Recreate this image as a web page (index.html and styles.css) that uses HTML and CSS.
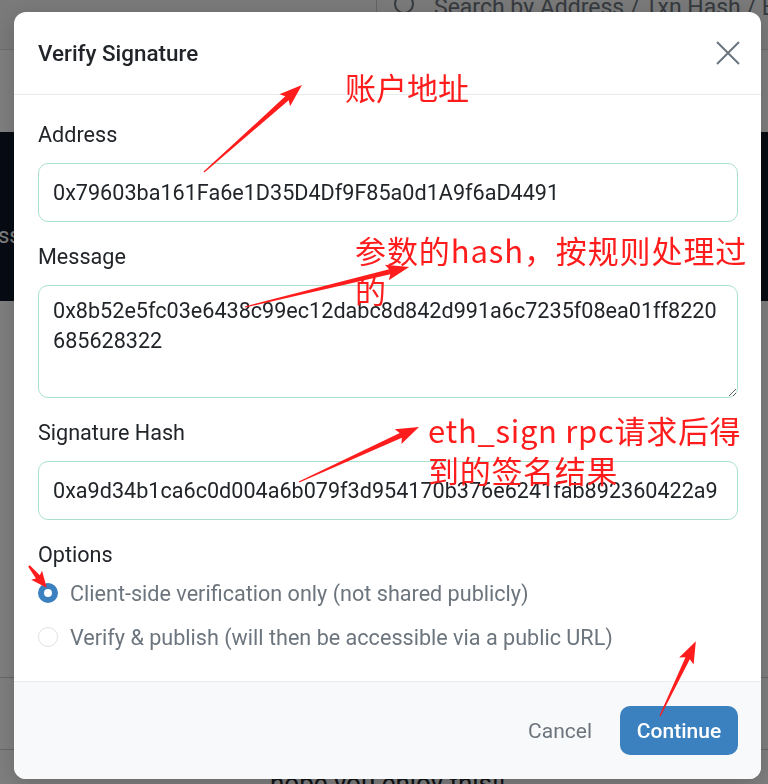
FILE: index.html
```html
<!DOCTYPE html>
<html lang="en">
<head>
    <meta charset="UTF-8">
    <meta name="viewport" content="width=device-width, initial-scale=1.0">
    <title>Verify Signature</title>
    <link rel="stylesheet" href="styles.css">
</head>
<body>
<div class="page">
    <header class="topbar">
        <div class="search">
            <svg class="search-icon" width="26" height="26" viewBox="0 0 26 26">
                <circle cx="12" cy="8" r="9" fill="none" stroke="#6c757d" stroke-width="2"/>
            </svg>
            <span class="search-text">Search by Address / Txn Hash / Block / Token / Domain Name</span>
        </div>
    </header>
    <nav class="nav"></nav>
    <section class="hero">
        <span class="hero-text">ss</span>
    </section>
    <main class="content">
        <div class="row row-tall"></div>
        <div class="row"></div>
        <p class="note">hope you enjoy this!!</p>
    </main>
</div>

<div class="backdrop"></div>

<div class="modal">
    <div class="modal-header">
        <h2 class="modal-title">Verify Signature</h2>
        <button class="close" aria-label="Close">
            <svg width="24" height="24" viewBox="0 0 24 24">
                <path d="M1 1 L23 23 M23 1 L1 23" stroke="#6c757d" stroke-width="2" fill="none"/>
            </svg>
        </button>
    </div>
    <div class="modal-body">
        <div class="field">
            <label class="field-label">Address</label>
            <input class="field-input" type="text" value="0x79603ba161Fa6e1D35D4Df9F85a0d1A9f6aD4491">
        </div>
        <div class="field">
            <label class="field-label">Message</label>
            <textarea class="field-input field-area">0x8b52e5fc03e6438c99ec12dabc8d842d991a6c7235f08ea01ff8220685628322</textarea>
        </div>
        <div class="field">
            <label class="field-label">Signature Hash</label>
            <input class="field-input" type="text" value="0xa9d34b1ca6c0d004a6b079f3d954170b376e6241fab892360422a9">
        </div>
        <div class="options">
            <div class="field-label">Options</div>
            <div class="option">
                <span class="radio checked"></span>
                <span>Client-side verification only (not shared publicly)</span>
            </div>
            <div class="option">
                <span class="radio"></span>
                <span>Verify &amp; publish (will then be accessible via a public URL)</span>
            </div>
        </div>
    </div>
    <div class="modal-footer">
        <button class="btn-cancel">Cancel</button>
        <button class="btn-continue">Continue</button>
    </div>
</div>

<!-- red annotations drawn on top of the screenshot -->
<div class="notes">
    <svg class="arrows" width="768" height="784" viewBox="0 0 768 784">
        <g fill="#ff1c1c">
            <polygon transform="translate(204 172) rotate(-41.6)" points="0,-0.6 111,-2.6 108,-8 131,0 108,8 111,2.6 0,0.6"/>
            <polygon transform="translate(245 307) rotate(-13.7)" points="0,-0.6 149,-2.6 146,-8 169,0 146,8 149,2.6 0,0.6"/>
            <polygon transform="translate(299 482) rotate(-24.6)" points="0,-0.6 112,-2.6 109,-8 132,0 109,8 112,2.6 0,0.6"/>
            <polygon transform="translate(29 566) rotate(50.7)" points="0,-1 14,-2.5 12,-7 28,0 12,7 14,2.5 0,1"/>
            <polygon transform="translate(660 716) rotate(-64.4)" points="0,-0.6 64,-2.4 61,-8 83,0 61,8 64,2.4 0,0.6"/>
        </g>
    </svg>
    <div class="note-text note-1">账户地址</div>
    <div class="note-text note-2">参数的hash，按规则处理过<br>的</div>
    <div class="note-text note-3">eth_sign rpc请求后得<br>到的签名结果</div>
</div>
</body>
</html>
```

FILE: styles.css
```css
* {
    margin: 0;
    padding: 0;
    box-sizing: border-box;
}

body {
    width: 768px;
    height: 784px;
    overflow: hidden;
    font-family: Roboto, 'Liberation Sans', sans-serif;
    background: #fff;
}

/* page underneath the dialog */
.page {
    width: 768px;
}

.topbar {
    height: 50px;
    background: #f4f4f4;
    border-bottom: 1px solid #dcdcdc;
    padding-left: 376px;
}

.search {
    display: flex;
    align-items: flex-start;
    gap: 16px;
    height: 40px;
    padding-left: 15px;
    border-left: 1px solid #c8c8c8;
    white-space: nowrap;
    overflow: hidden;
}

.search-icon {
    flex: none;
    margin-top: -4px;
}

.search-text {
    font-size: 23px;
    line-height: 26px;
    margin-top: -5px;
    color: #6c757d;
}

.nav {
    height: 82px;
    background: #fff;
}

.hero {
    height: 169px;
    background: #0e1828;
    padding-top: 91px;
    overflow: hidden;
}

.hero-text {
    display: block;
    margin-left: -2px;
    font-size: 22px;
    color: #fff;
}

.content {
    background: #fff;
}

.row {
    height: 72px;
    border-bottom: 1px solid #cfcfcf;
}

.row-tall {
    height: 377px;
}

.note {
    margin: 18px 0 0 270px;
    font-size: 26px;
    color: #212529;
}

.backdrop {
    position: fixed;
    inset: 0;
    background: rgba(0, 0, 0, 0.5);
}

/* dialog */
.modal {
    position: fixed;
    left: 14px;
    top: 12px;
    width: 747px;
    background: #fff;
    border-radius: 12px;
    overflow: hidden;
    box-shadow: 0 6px 24px rgba(0, 0, 0, 0.18);
}

.modal-header {
    display: flex;
    justify-content: space-between;
    align-items: center;
    height: 83px;
    padding: 0 21px 0 24px;
    border-bottom: 1px solid #e9ecef;
}

.modal-title {
    font-size: 22.4px;
    font-weight: 500;
    color: #212529;
}

.close {
    display: flex;
    border: none;
    background: none;
    cursor: pointer;
}

.modal-body {
    padding: 25px 23px 29px 24px;
}

.field {
    margin-bottom: 20px;
}

.field-label {
    display: block;
    font-size: 21.6px;
    line-height: 30px;
    color: #212529;
    margin-bottom: 13px;
}

.field-input {
    display: block;
    width: 100%;
    height: 59px;
    padding: 0 14px;
    border: 1px solid #abe0cd;
    border-radius: 10px;
    font-family: Roboto, 'Liberation Sans', sans-serif;
    font-size: 21.6px;
    color: #212529;
    background: #fff;
    outline: none;
}

.field-area {
    height: 113px;
    padding: 10px 12px 10px 14px;
    line-height: 30px;
    word-break: break-all;
}

.options .field-label {
    margin-bottom: 8px;
}

.option {
    display: flex;
    align-items: center;
    gap: 12px;
    height: 30px;
    font-size: 21.6px;
    color: #6c757d;
}

.option + .option {
    margin-top: 14px;
}

.radio {
    flex: none;
    width: 20px;
    height: 20px;
    border-radius: 50%;
    border: 1px solid #dee2e6;
    background: #fff;
}

.radio.checked {
    border: 6px solid #3b81bf;
}

.modal-footer {
    display: flex;
    justify-content: flex-end;
    align-items: center;
    gap: 14px;
    height: 98px;
    padding: 0 23px;
    background: #f8f9fa;
    border-top: 1px solid #e9ecef;
}

.btn-cancel,
.btn-continue {
    height: 49px;
    border: none;
    font-family: Roboto, 'Liberation Sans', sans-serif;
    font-size: 21px;
    cursor: pointer;
}

.btn-cancel {
    padding: 0 14px;
    background: none;
    color: #6c757d;
}

.btn-continue {
    width: 118px;
    border-radius: 10px;
    background: #3b81bf;
    color: #fff;
    font-weight: 500;
}

/* annotations */
.notes {
    position: fixed;
    inset: 0;
    pointer-events: none;
}

.arrows {
    position: absolute;
    left: 0;
    top: 0;
}

.note-text {
    position: absolute;
    font-family: 'Noto Sans CJK SC', sans-serif;
    font-size: 31px;
    line-height: 40px;
    color: #ff1c1c;
    white-space: nowrap;
}

.note-1 {
    left: 345px;
    top: 67px;
}

.note-2 {
    left: 355px;
    top: 230px;
    letter-spacing: 0.9px;
}

.note-3 {
    left: 428px;
    top: 410px;
    line-height: 40px;
    letter-spacing: 0.7px;
}
```
